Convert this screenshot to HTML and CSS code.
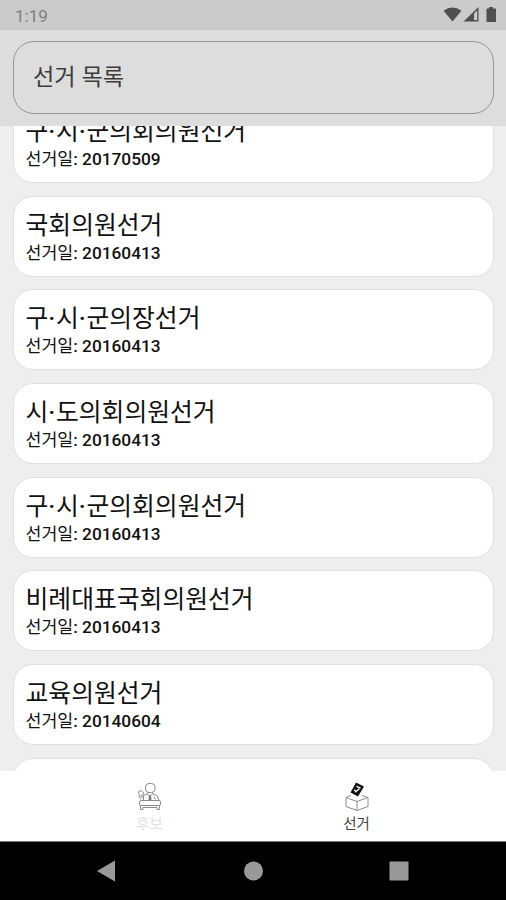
FILE: index.html
```
<!DOCTYPE html>
<html lang="ko">
<head>
  <meta charset="UTF-8" />
  <meta name="viewport" content="width=device-width, initial-scale=1.0" />
  <title>선거 목록</title>
  <link rel="stylesheet" href="styles.css">
</head>
<body>
  <div class="status-bar">
    <span class="clock">1:19</span>
    <svg class="status-icons" width="56" height="18" viewBox="0 0 56 18">
      <path d="M1.500 4.800Q10.500 -1.800 19.500 4.800L10.500 15.500Z" />
      <path d="M21.500 15.500L36.500 1V15.500Z" />
      <path class="signal-gap" d="M32 7.500L35.200 4.400V14H32Z" />
      <path d="M47 1H51V2.500H54V16H44.500V2.500H47Z" />
    </svg>
  </div>
  <header>
    <h1 class="title-box">선거 목록</h1>
  </header>
  <main class="list">
    <div class="card">
      <h2>구<b>·</b>시<b>·</b>군의회의원선거</h2>
      <p>선거일<b>: 20170509</b></p>
    </div>
    <div class="card">
      <h2>국회의원선거</h2>
      <p>선거일<b>: 20160413</b></p>
    </div>
    <div class="card">
      <h2>구<b>·</b>시<b>·</b>군의장선거</h2>
      <p>선거일<b>: 20160413</b></p>
    </div>
    <div class="card">
      <h2>시<b>·</b>도의회의원선거</h2>
      <p>선거일<b>: 20160413</b></p>
    </div>
    <div class="card">
      <h2>구<b>·</b>시<b>·</b>군의회의원선거</h2>
      <p>선거일<b>: 20160413</b></p>
    </div>
    <div class="card">
      <h2>비례대표국회의원선거</h2>
      <p>선거일<b>: 20160413</b></p>
    </div>
    <div class="card">
      <h2>교육의원선거</h2>
      <p>선거일<b>: 20140604</b></p>
    </div>
    <div class="card"></div>
  </main>
  <nav class="tabs">
    <a class="tab">
      <!-- 연단에 선 후보 -->
      <svg width="30" height="30" viewBox="0 0 30 30">
        <rect x="10.500" y="1.500" width="9.500" height="9" rx="3.500" />
        <path d="M12.500 10.500V12L8.500 13.500V18M17.500 10.500V12L22 13.500L24 18M12.500 12L15 14L17.500 12M15 14V18" />
        <path class="tie" d="M14 13.500H16L16.500 18H13.500Z" />
        <path d="M8.500 16L4.500 13.500M4.500 13.500L3.500 9.500L6 8.500L8.500 10.500L8 13L6 14M3.500 14L6 17.500M19 14.500L20.500 17.500" />
        <rect x="4.500" y="18.500" width="21" height="5" rx="1.500" />
        <path d="M5.500 23.500V27.500H8V25.500H22V27.500H24.500V23.500" />
      </svg>
      <span>후보</span>
    </a>
    <a class="tab active">
      <!-- 투표함과 투표용지 -->
      <svg width="30" height="30" viewBox="0 0 30 30">
        <path d="M9 13.500L4 15.500L15 19.500L26 15.500L20 13.500M4 15.500V24.500L15 28.500L26 24.500V15.500M15 19.500V28.500" />
        <path class="ballot" d="M14 .5L22 4.500L16 14.500L8.500 10.500Z" />
        <path class="check" d="M12.300 7.500L13.800 9.800L17.300 6.800M14.500 4.300L18.500 6.200" />
      </svg>
      <span>선거</span>
    </a>
  </nav>
  <div class="system-nav">
    <svg width="20" height="22" viewBox="0 0 20 22"><path d="M0 11L18 .5V21.500Z" /></svg>
    <svg width="20" height="20" viewBox="0 0 20 20"><circle cx="10.500" cy="10" r="9.500" /></svg>
    <svg width="20" height="20" viewBox="0 0 20 20"><rect x=".5" y=".5" width="19" height="19" rx="1" /></svg>
  </div>
</body>
</html>
```
FILE: styles.css
```
* {
  box-sizing: border-box;
}
body {
  margin: 0;
  height: 900px;
  display: flex;
  flex-direction: column;
  overflow: hidden;
  background-color: #eee;
  color: #111;
  font-family: Roboto, 'Noto Sans CJK KR', sans-serif;
}
h1, h2, p {
  margin: 0;
  font-weight: 400;
}
b {
  font-weight: 500;
}
.status-bar {
  flex: none;
  height: 30px;
  padding: 0 8px 0 15px;
  display: flex;
  justify-content: space-between;
  align-items: center;
  background-color: #cbcbcb;
}
.clock {
  padding-top: 2px;
  font-size: 17px;
  color: #808080;
}
.status-icons {
  fill: #505050;
}
.signal-gap {
  fill: #cbcbcb;
}
header {
  flex: none;
  height: 96px;
  padding: 11px 12px 11px 13px;
  background-color: #ddd;
}
.title-box {
  height: 73px;
  padding: 0 19px;
  border: 1px solid #969696;
  border-radius: 21px;
  font-size: 23.2px;
  line-height: 71px;
  color: #3c3c3c;
}
.list {
  flex: none;
  height: 645px;
  padding: 0 12px 0 13px;
  overflow: hidden;
}
.card {
  height: 81px;
  margin-bottom: 12.7px;
  padding: 11px 11.5px;
  background-color: #fff;
  border: 1px solid #e0e0e0;
  border-radius: 20px;
}
/* 첫 카드는 헤더 아래로 스크롤된 상태 */
.card:first-child {
  margin-top: -24px;
}
.card h2 {
  font-size: 24.8px;
  line-height: 36px;
}
.card h2 b {
  letter-spacing: 0.6px;
}
.card p {
  font-size: 17.3px;
  line-height: 19px;
}
.tabs {
  flex: none;
  height: 71px;
  padding: 0 46px;
  display: flex;
  background-color: #fff;
  border-bottom: 1px solid #777;
}
.tab {
  flex: 1;
  padding-top: 11px;
  display: flex;
  flex-direction: column;
  align-items: center;
  font-size: 14.5px;
  line-height: 26px;
  color: #e2e2e2;
}
.tab svg {
  flex: none;
  fill: none;
  stroke: #8c8c8c;
  stroke-width: 1;
}
.tab .tie {
  fill: #777;
  stroke: none;
}
.tab.active {
  color: #444;
}
.tab .ballot {
  fill: #111;
  stroke: none;
}
.tab .check {
  stroke: #fff;
  stroke-width: 1.3;
}
.system-nav {
  flex: 1;
  display: flex;
  justify-content: center;
  align-items: center;
  gap: 126px;
  background-color: #000;
}
.system-nav svg {
  fill: #999;
}
```
